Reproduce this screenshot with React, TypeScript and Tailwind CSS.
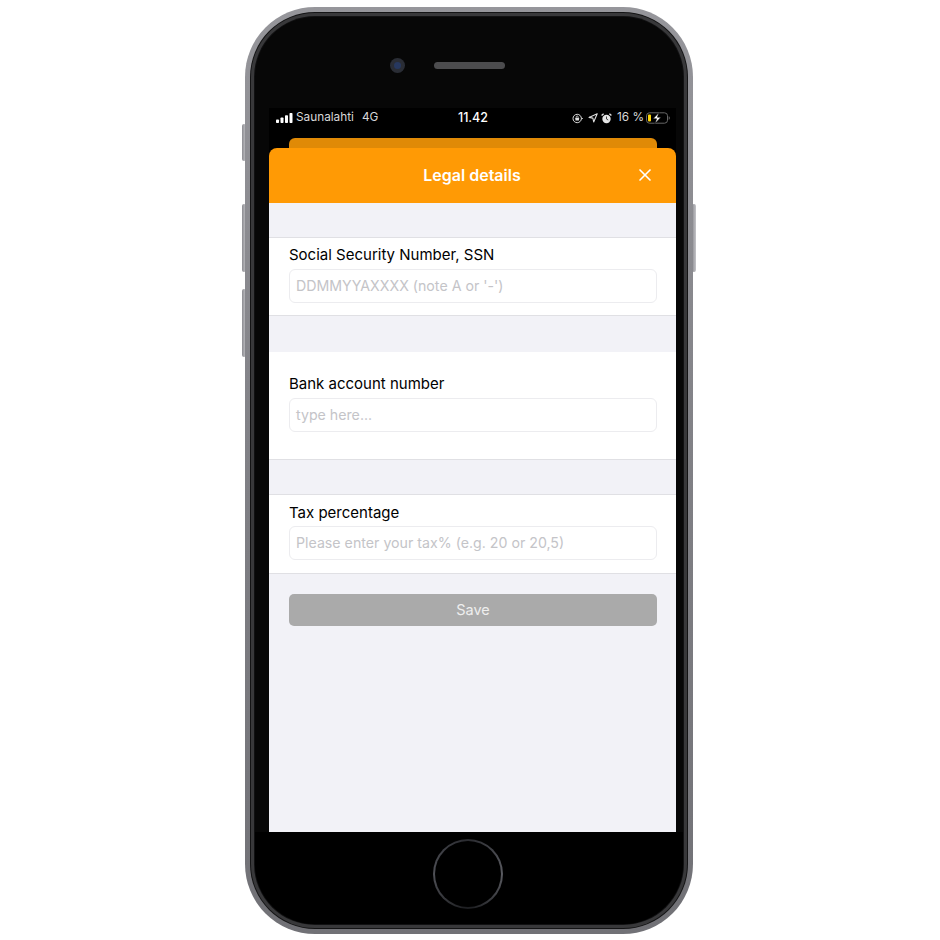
import * as React from "react"
import { X } from "lucide-react"

/* iPhone mockup: "Legal details" sheet */

const font = "font-['Inter','Noto_Sans',sans-serif]"

function SideButton({ className }: { className: string }) {
  return <div className={`absolute w-[4px] rounded-[2px] bg-gradient-to-r from-[#8d8d92] to-[#c4c4c8] ${className}`} />
}

function StatusBar() {
  return (
    <div className="grid h-[30px] grid-cols-3 items-center bg-black pb-[10px] pl-[7px] pr-[6px] text-[11.8px] text-[#d8d8d8]">
      <div className="flex items-center">
        <svg width="17" height="10" viewBox="0 0 17 10" fill="#fff" className="mr-[3px]">
          <rect x="0" y="6.5" width="3" height="3.5" rx="0.8" />
          <rect x="4.5" y="4.5" width="3" height="5.5" rx="0.8" />
          <rect x="9" y="2.2" width="3" height="7.8" rx="0.8" />
          <rect x="13.5" y="0" width="3" height="10" rx="0.8" />
        </svg>
        <span className="whitespace-nowrap">Saunalahti</span>
        <span className="ml-[8px]">4G</span>
      </div>
      <div className="text-center text-[12.5px] font-medium text-white">11.42</div>
      <div className="flex items-center justify-end">
        <svg width="11" height="11" viewBox="0 0 11 11" fill="none" className="mr-[5px]">
          <circle cx="5.2" cy="5.5" r="4.2" stroke="#ddd" strokeWidth="1" />
          <rect x="3.4" y="4.8" width="3.6" height="2.8" rx="0.5" fill="#ddd" />
          <path d="M4.2 4.8V4a1 1 0 0 1 2 0v.8" stroke="#ddd" strokeWidth="0.8" />
          <path d="M9.4 5.5h1.4" stroke="#ddd" strokeWidth="1" />
        </svg>
        <svg width="10" height="10" viewBox="0 0 10 10" fill="none" className="mr-[3px]">
          <path d="M9.2 0.8L1 4.4l3.9.7.8 3.9z" stroke="#ddd" strokeWidth="1.1" strokeLinejoin="round" />
        </svg>
        <svg width="11" height="11" viewBox="0 0 11 11" className="mr-[5px]">
          <circle cx="5.5" cy="6" r="4.2" fill="#e6e6e6" />
          <path d="M5.5 3.5V6l1.7 1" stroke="#333" strokeWidth="0.9" fill="none" />
          <path d="M0.6 2.6l2-1.8M10.4 2.6l-2-1.8" stroke="#e6e6e6" strokeWidth="1.3" />
        </svg>
        <span className="mr-[2px] whitespace-nowrap">16 %</span>
        <svg width="24" height="12" viewBox="0 0 24 12" fill="none">
          <rect x="0.5" y="0.8" width="21" height="10.4" rx="3" stroke="#666" />
          <rect x="2" y="2.4" width="3" height="7.2" rx="1" fill="#ffd60a" />
          <path d="M13 0.6L7 6.8h3.6L9 11.6l6-6.4h-3.6z" fill="#fff" stroke="#000" strokeWidth="0.6" />
          <path d="M22.7 4.2c.8.3 1.1 1 1.1 1.8s-.3 1.5-1.1 1.8z" fill="#666" />
        </svg>
      </div>
    </div>
  )
}

function Field({
  label,
  placeholder,
  className,
  labelClass,
}: {
  label: string
  placeholder: string
  className: string
  labelClass: string
}) {
  return (
    <div className={`border-b border-[#e0e0e4] bg-white pl-[20px] pr-[19px] ${className}`}>
      <div className={`text-[15px] leading-[20px] text-black ${labelClass}`}>{label}</div>
      <div className="flex h-[34px] items-center rounded-[6px] border border-[#ececef] bg-white px-[6px] text-[14.2px] text-[#c4c4c8]">
        {placeholder}
      </div>
    </div>
  )
}

function Screen() {
  return (
    <div className={`flex h-[724px] w-[407px] flex-col bg-black ${font}`}>
      <StatusBar />
      <div className="ml-[20px] mr-[19px] h-[10px] rounded-t-[6px] bg-[#e08a06]" />
      <div className="flex h-[55px] items-center rounded-t-[8px] bg-[#ff9a05] pb-[2px] pl-[20px] pr-[21px] text-white">
        <div className="w-[20px]" />
        <div className="flex-1 text-center text-[16px] font-semibold">Legal details</div>
        <X size={20} strokeWidth={2} color="#fff" />
      </div>
      <div className="flex flex-1 flex-col bg-[#f2f2f7]">
        <div className="h-[34px]" />
        <Field
          label="Social Security Number, SSN"
          placeholder="DDMMYYAXXXX (note A or '-')"
          className="h-[79px] border-t pt-[7px]"
          labelClass="mb-[4px]"
        />
        <div className="h-[36px]" />
        <Field
          label="Bank account number"
          placeholder="type here..."
          className="h-[108px] pt-[22px]"
          labelClass="mb-[4px]"
        />
        <div className="h-[34px]" />
        <Field
          label="Tax percentage"
          placeholder="Please enter your tax% (e.g. 20 or 20,5)"
          className="h-[80px] border-t pt-[8px]"
          labelClass="mb-[3px]"
        />
        <div className="ml-[20px] mr-[19px] mt-[20px] flex h-[32px] items-center justify-center rounded-[5px] bg-[#aaaaaa] text-[14.5px] text-[#eeeeee]">
          Save
        </div>
      </div>
    </div>
  )
}

export default function App() {
  return (
    <div className="h-[940px] w-[940px] overflow-hidden bg-white pl-[245px] pt-[7px]">
      <div className="relative w-[448px]">
        <SideButton className="left-[-3px] top-[117px] h-[37px]" />
        <SideButton className="left-[-3px] top-[197px] h-[68px]" />
        <SideButton className="left-[-3px] top-[282px] h-[68px]" />
        <SideButton className="right-[-3px] top-[197px] h-[68px]" />
        <div className="relative rounded-[70px] bg-gradient-to-b from-[#96969b] via-[#808085] to-[#717176] p-[5px]">
          <div className="rounded-[65px] bg-[#141415] p-[1px]">
            <div className="rounded-[64px] bg-[#38383a] p-[3px]">
              <div className="rounded-[61px] bg-[#111112] p-[1px]">
                <div className="flex flex-col overflow-hidden rounded-[60px] bg-[#070707] pl-[14px] pr-[7px]">
                  <div className="flex h-[91px] w-full items-center pl-[121px] pt-[5px]">
                    <div className="flex h-[15px] w-[15px] items-center justify-center rounded-full bg-[#2a2d35]">
                      <div className="h-[7px] w-[7px] rounded-full bg-[#27385f]" />
                    </div>
                    <div className="ml-[29px] h-[7px] w-[71px] rounded-full bg-[#4c4c4e]" />
                  </div>
                  <Screen />
                  <div className="-ml-[14px] -mr-[7px] flex h-[92px] items-start justify-center bg-black pr-[2px] pt-[7px]">
                    <div className="rounded-full bg-[conic-gradient(#2a2b30,#5a5b61_25%,#1c1d20_50%,#4f5056_75%,#2a2b30)] p-[2px]">
                      <div className="h-[66px] w-[66px] rounded-full bg-black" />
                    </div>
                  </div>
                </div>
              </div>
            </div>
          </div>
        </div>
      </div>
    </div>
  )
}
